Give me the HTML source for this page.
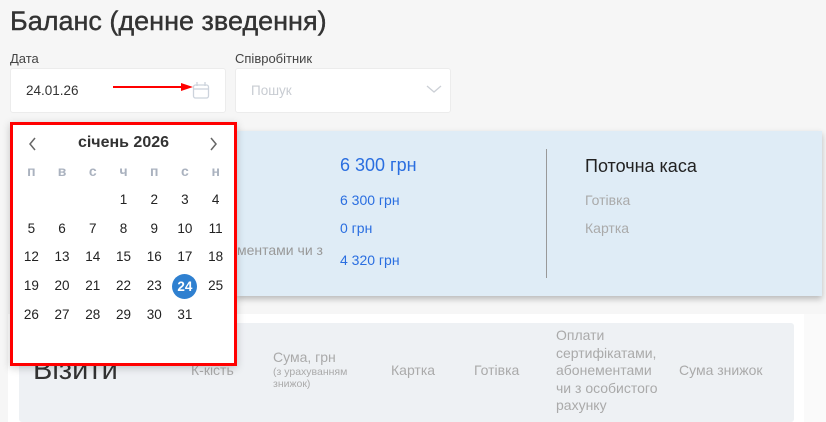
<!DOCTYPE html>
<html><head><meta charset="utf-8"><style>
*{box-sizing:border-box;margin:0;padding:0}
body{width:826px;height:422px;overflow:hidden;background:#f6f6f6;font-family:"Liberation Sans",sans-serif;position:relative;color:#333}
.a{position:absolute;white-space:nowrap}
</style></head><body>
<div class="a" style="left:10px;top:6px;font-size:27px;color:#333;-webkit-text-stroke:0.4px #333">Баланс (денне зведення)</div>
<div class="a" style="left:10px;top:51px;font-size:13px;color:#444">Дата</div>
<div class="a" style="left:235px;top:51px;font-size:13px;color:#444">Співробітник</div>
<div class="a" style="left:10px;top:68px;width:216px;height:45px;background:#fff;border:1px solid #ececec;border-radius:3px"></div>
<div class="a" style="left:26px;top:83px;font-size:13.5px;color:#333">24.01.26</div>
<div class="a" style="left:113px;top:86px;width:72px;height:2px;background:#f00"></div>
<svg class="a" style="left:176px;top:80px" width="34" height="20"><polygon points="5,3 17,7 5,11" fill="#f00"/><rect x="17.5" y="5" width="15" height="13" rx="2" fill="none" stroke="#ccd3dc" stroke-width="1.3"/><line x1="17.5" y1="9" x2="32.5" y2="9" stroke="#ccd3dc" stroke-width="1.3"/><line x1="21" y1="2" x2="21" y2="6" stroke="#ccd3dc" stroke-width="1.3"/><line x1="29" y1="2" x2="29" y2="6" stroke="#ccd3dc" stroke-width="1.3"/></svg>
<div class="a" style="left:235px;top:68px;width:216px;height:45px;background:#fff;border:1px solid #ececec;border-radius:3px"></div>
<div class="a" style="left:251px;top:83px;font-size:13.5px;color:#c8ccd2">Пошук</div>
<svg class="a" style="left:426px;top:84px" width="16" height="10"><polyline points="1,2 8,8 15,2" fill="none" stroke="#ccd0d6" stroke-width="1.3"/></svg>

<div class="a" style="left:236px;top:131px;width:586px;height:165px;background:#dfecf6;box-shadow:0 3px 6px rgba(0,0,0,.25)"></div>
<div class="a" style="left:340px;top:155px;font-size:18px;color:#2a6ee0">6 300 грн</div>
<div class="a" style="left:340px;top:192px;font-size:14px;color:#2a6ee0">6 300 грн</div>
<div class="a" style="left:340px;top:220px;font-size:14px;color:#2a6ee0">0 грн</div>
<div class="a" style="left:340px;top:252px;font-size:14px;color:#2a6ee0">4 320 грн</div>
<div class="a" style="left:237px;top:242px;font-size:14px;color:#999">ментами чи з</div>
<div class="a" style="left:546px;top:149px;width:1px;height:129px;background:#999"></div>
<div class="a" style="left:585px;top:156px;font-size:18px;color:#222">Поточна каса</div>
<div class="a" style="left:585px;top:192px;font-size:14px;color:#aaa">Готівка</div>
<div class="a" style="left:585px;top:220px;font-size:14px;color:#aaa">Картка</div>

<div class="a" style="left:8px;top:314px;width:796px;height:108px;background:#fff"></div>
<div class="a" style="left:804px;top:314px;width:22px;height:108px;background:#fafafa"></div>
<div class="a" style="left:19px;top:323px;width:775px;height:99px;background:#eef1f4;border-radius:3px"></div>
<div class="a" style="left:33px;top:354px;font-size:29px;color:#333">Візити</div>
<div class="a" style="left:191px;top:362px;font-size:14px;color:#aaa">К-кість</div>
<div class="a" style="left:273px;top:349px;font-size:14px;color:#aaa">Сума, грн</div>
<div class="a" style="left:273px;top:366px;font-size:10.5px;color:#aaa;line-height:12px">(з урахуванням<br>знижок)</div>
<div class="a" style="left:391px;top:362px;font-size:14px;color:#aaa">Картка</div>
<div class="a" style="left:474px;top:362px;font-size:14px;color:#aaa">Готівка</div>
<div class="a" style="left:556px;top:327px;font-size:14px;color:#aaa;line-height:17.5px">Оплати<br>сертифікатами,<br>абонементами<br>чи з особистого<br>рахунку</div>
<div class="a" style="left:679px;top:362px;font-size:14px;color:#aaa">Сума знижок</div>

<div class="a" style="left:10px;top:122px;width:227px;height:244px;background:#fff;border:3px solid #f00;box-shadow:0 2px 8px rgba(0,0,0,.2)"></div>
<svg class="a" style="left:26px;top:136px" width="200" height="16"><polyline points="9,2 4,8 9,14" fill="none" stroke="#666" stroke-width="1.5"/><polyline points="185,2 190,8 185,14" fill="none" stroke="#666" stroke-width="1.5"/></svg>
<div class="a" style="left:10px;top:134px;width:227px;text-align:center;font-size:16px;font-weight:bold;color:#333">січень 2026</div>
<div class="a" style="left:16px;top:0;width:215px;font-size:14px">
<div style="position:absolute;top:163px;width:215px;display:flex;color:#aab2bf;font-weight:bold">
<span style="flex:1;text-align:center">п</span><span style="flex:1;text-align:center">в</span><span style="flex:1;text-align:center">с</span><span style="flex:1;text-align:center">ч</span><span style="flex:1;text-align:center">п</span><span style="flex:1;text-align:center">с</span><span style="flex:1;text-align:center">н</span></div>
</div>
<div class="a" style="left:16px;top:186px;width:215px;display:grid;grid-template-columns:repeat(7,1fr);grid-auto-rows:28.7px;font-size:13.5px;color:#222;text-align:center;line-height:28px">
<span></span><span></span><span></span><span>1</span><span>2</span><span>3</span><span>4</span>
<span>5</span><span>6</span><span>7</span><span>8</span><span>9</span><span>10</span><span>11</span>
<span>12</span><span>13</span><span>14</span><span>15</span><span>16</span><span>17</span><span>18</span>
<span>19</span><span>20</span><span>21</span><span>22</span><span>23</span><span><b style="display:inline-block;width:25px;height:25px;border-radius:50%;background:#2f80d0;color:#fff;line-height:25px;margin-top:2px">24</b></span><span>25</span>
<span>26</span><span>27</span><span>28</span><span>29</span><span>30</span><span>31</span><span></span>
</div>
</body></html>
